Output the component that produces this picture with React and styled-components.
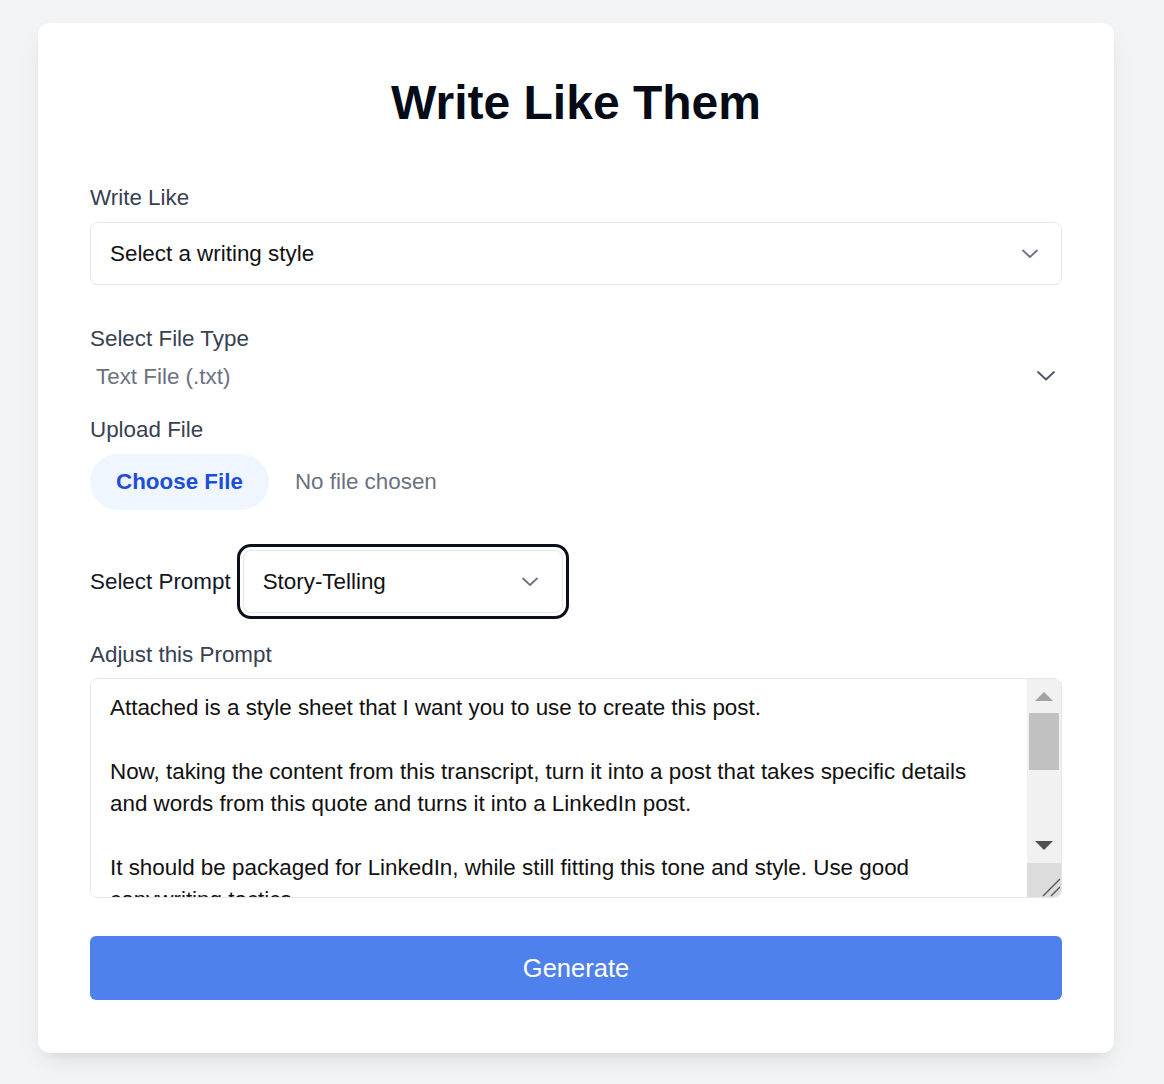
import React, { useState } from "react";
import styled, { createGlobalStyle } from "styled-components";

const GlobalStyle = createGlobalStyle`
  html, body {
    margin: 0;
    padding: 0;
    background: #f3f4f6;
    font-family: "Liberation Sans", Arial, sans-serif;
  }
  * { box-sizing: border-box; }
`;

const Page = styled.div`
  padding: 23px 0 32px 38px;
`;

const Card = styled.div`
  width: 1076px;
  background: #fff;
  border-radius: 12px;
  box-shadow: 0 10px 25px -5px rgba(0, 0, 0, 0.1), 0 6px 10px -6px rgba(0, 0, 0, 0.06);
  padding: 56px 52px 53px;
  display: flex;
  flex-direction: column;
`;

const Title = styled.h1`
  margin: 0 0 57px;
  font-size: 48px;
  line-height: 48px;
  font-weight: 700;
  color: #060b18;
  text-align: center;
`;

const Field = styled.div`
  display: flex;
  flex-direction: ${(p) => (p.$inline ? "row" : "column")};
  align-items: ${(p) => (p.$inline ? "center" : "stretch")};
  gap: ${(p) => p.$gap || 10}px;
  margin-bottom: ${(p) => p.$after || 0}px;
`;

const Label = styled.label`
  font-size: 22.4px;
  line-height: 28px;
  color: ${(p) => (p.$dark ? "#111827" : "#374151")};
  white-space: nowrap;
`;

const SelectWrap = styled.div`
  position: relative;
  width: ${(p) => p.$width || "100%"};
`;

const Select = styled.select`
  appearance: none;
  width: 100%;
  font-family: inherit;
  font-size: 22.4px;
  color: #111;
  background: #fff;
  border: 1px solid #e5e7eb;
  border-radius: 8px;
  height: 63px;
  padding: 0 48px 0 19px;
  outline: ${(p) => (p.$focused ? "3px solid #0b0f19" : "none")};
  outline-offset: 3px;
`;

const PlainSelect = styled.select`
  appearance: none;
  width: 100%;
  font-family: inherit;
  font-size: 22.4px;
  color: #6b7280;
  background: transparent;
  border: none;
  height: 28px;
  padding: 0 40px 0 6px;
  outline: none;
`;

const Chevron = styled.svg`
  position: absolute;
  right: ${(p) => p.$right}px;
  top: 50%;
  transform: translateY(-50%);
  pointer-events: none;
`;

const FileRow = styled.div`
  display: flex;
  align-items: center;
  gap: 26px;
`;

const FileButton = styled.button`
  height: 56px;
  padding: 0 26px;
  border: none;
  border-radius: 28px;
  background: #eff6ff;
  color: #1d4ed8;
  font-family: inherit;
  font-size: 22.4px;
  font-weight: 700;
  cursor: pointer;
`;

const FileName = styled.span`
  font-size: 22.4px;
  color: #6b7280;
`;

const TextBox = styled.div`
  display: flex;
  height: 220px;
  border: 1px solid #e5e7eb;
  border-radius: 8px;
  overflow: hidden;
`;

const Textarea = styled.textarea`
  flex: 1;
  min-width: 0;
  border: none;
  padding: 13px 19px;
  font-family: inherit;
  font-size: 22.4px;
  line-height: 32px;
  color: #111;
  outline: none;
  resize: none;
  overflow: hidden;
`;

const ScrollBar = styled.div`
  width: 34px;
  display: flex;
  flex-direction: column;
  background: #f1f1f1;
`;

const ScrollButton = styled.div`
  height: 34px;
  display: flex;
  align-items: center;
  justify-content: center;
`;

const ScrollTrack = styled.div`
  flex: 1;
  padding: 0 2px;
`;

const Thumb = styled.div`
  height: 57px;
  background: #c1c1c1;
`;

const Resizer = styled.div`
  height: 34px;
  background: #dcdcdc;
  display: flex;
  align-items: flex-end;
  justify-content: flex-end;
`;

const GenerateButton = styled.button`
  height: 64px;
  border: none;
  border-radius: 6px;
  background: #4f81ec;
  color: #fff;
  font-family: inherit;
  font-size: 25.5px;
  cursor: pointer;
`;

function ChevronIcon({ right, size = 14, color = "#6b7280" }) {
  const h = Math.round(size / 2) + 1;
  return (
    <Chevron $right={right} width={size + 2} height={h + 2} viewBox={`0 0 ${size + 2} ${h + 2}`}>
      <path
        d={`M1 1.5 L${size / 2 + 1} ${h} L${size + 1} 1.5`}
        fill="none"
        stroke={color}
        strokeWidth="1.8"
        strokeLinecap="round"
        strokeLinejoin="round"
      />
    </Chevron>
  );
}

function Triangle({ up, color }) {
  return (
    <svg width="18" height="10" viewBox="0 0 18 10">
      <path d={up ? "M0 10 L9 1 L18 10 Z" : "M0 0 L9 9 L18 0 Z"} fill={color} />
    </svg>
  );
}

const promptText = `Attached is a style sheet that I want you to use to create this post.

Now, taking the content from this transcript, turn it into a post that takes specific details and words from this quote and turns it into a LinkedIn post.

It should be packaged for LinkedIn, while still fitting this tone and style. Use good copywriting tactics.

Hook the reader in the very first line, keep the paragraphs short and end with a question that invites comments.

Do not use hashtags or emojis unless they appear in the style sheet.`;

export default function App() {
  const [prompt, setPrompt] = useState(promptText);

  return (
    <>
      <GlobalStyle />
      <Page>
        <Card>
          <Title>Write Like Them</Title>

          <Field $after={40}>
            <Label>Write Like</Label>
            <SelectWrap>
              <Select defaultValue="">
                <option value="">Select a writing style</option>
              </Select>
              <ChevronIcon right={24} />
            </SelectWrap>
          </Field>

          <Field $after={26} $gap={9}>
            <Label>Select File Type</Label>
            <SelectWrap>
              <PlainSelect defaultValue="txt">
                <option value="txt">Text File (.txt)</option>
              </PlainSelect>
              <ChevronIcon right={7} size={16} color="#4b5563" />
            </SelectWrap>
          </Field>

          <Field $after={40}>
            <Label>Upload File</Label>
            <FileRow>
              <FileButton type="button">Choose File</FileButton>
              <FileName>No file chosen</FileName>
            </FileRow>
          </Field>

          <Field $inline $after={28} $gap={12}>
            <Label $dark>Select Prompt</Label>
            <SelectWrap $width="320px">
              <Select $focused defaultValue="story">
                <option value="story">Story-Telling</option>
              </Select>
              <ChevronIcon right={25} />
            </SelectWrap>
          </Field>

          <Field $after={38} $gap={9}>
            <Label>Adjust this Prompt</Label>
            <TextBox>
              <Textarea value={prompt} onChange={(e) => setPrompt(e.target.value)} />
              <ScrollBar>
                <ScrollButton>
                  <Triangle up color="#a3a3a3" />
                </ScrollButton>
                <ScrollTrack>
                  <Thumb />
                </ScrollTrack>
                <ScrollButton>
                  <Triangle color="#505050" />
                </ScrollButton>
                <Resizer>
                  <svg width="22" height="22" viewBox="0 0 22 22">
                    <path d="M4 21 L21 4 M12 21 L21 12" stroke="#555" strokeWidth="1.4" />
                  </svg>
                </Resizer>
              </ScrollBar>
            </TextBox>
          </Field>

          <GenerateButton type="button">Generate</GenerateButton>
        </Card>
      </Page>
    </>
  );
}
